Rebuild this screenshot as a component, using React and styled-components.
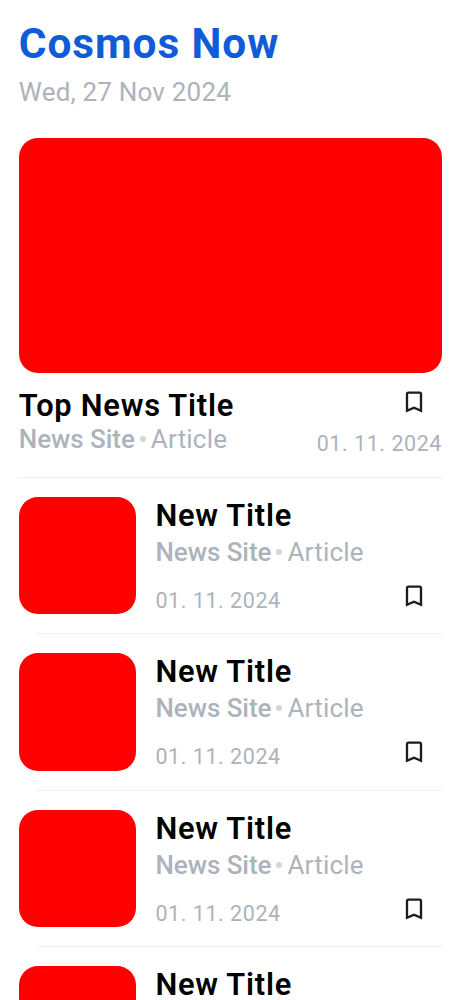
import React from "react";
import styled, { createGlobalStyle } from "styled-components";

const Global = createGlobalStyle`
  * { box-sizing: border-box; }
  html, body { margin: 0; background: #fff; overflow: hidden; }
  body { font-family: Roboto, "Liberation Sans", sans-serif; }
`;
const Page = styled.main`
  width: 461px; height: 1000px; overflow: hidden;
  padding: 19px 19px 0 18.8px; background: #fff; color: #000;
`;
const Brand = styled.h1`
  margin: 0; font-size: 42.4px; line-height: 50px; font-weight: 700;
  letter-spacing: 0.9px; color: #105bd8; white-space: nowrap;
`;
const Today = styled.div`
  margin-top: 7px; height: 32px; font-size: 26px; line-height: 32px;
  letter-spacing: 0.2px; color: #adb3bb; white-space: nowrap;
`;
const Hero = styled.div`
  margin-top: 30.4px; height: 235px; border-radius: 19px; background: #f00;
`;
const TopStory = styled.section`
  display: flex; justify-content: space-between; height: 104.6px;
  padding-top: 14.6px; border-bottom: 1px solid #eeeff0;
`;
const Title = styled.h2`
  margin: ${p => p.$top || 0}px 0 0; font-size: 30.8px; line-height: 36px; font-weight: 600;
  letter-spacing: 0.75px; white-space: nowrap;
`;
const Source = styled.div`
  display: flex; align-items: center; height: 32px;
  margin-top: ${p => p.$gap || 0}px;
  font-size: 26px; line-height: 32px; color: #adb3bb; white-space: nowrap;
`;
const Site = styled.span`font-weight: 500; letter-spacing: -0.05px;`;
const Dot = styled.span`
  width: 6px; height: 6px; margin: 0 5px; border-radius: 50%; background: #d3d5d8;
`;
const Section = styled.span`letter-spacing: 0.2px;`;
const DateText = styled.time`
  font-size: 21.5px; line-height: 26px; letter-spacing: 0.55px; color: #adb3bb; white-space: nowrap;
`;
const Side = styled.div`
  display: flex; flex-direction: column; align-items: flex-end;
  gap: 15px;
`;
const IconButton = styled.button`
  display: flex; margin: 0 14px 0 0; padding: 0; border: 0; background: none;
`;
const Item = styled.article`
  display: flex; gap: 19.4px; height: 156.4px; padding-top: 19px;
`;
const Thumb = styled.div`
  flex: none; width: 117.2px; height: 117.5px; border-radius: 19px; background: #f00;
`;
const Body = styled.div`flex: 1;`;
const Footer = styled.div`
  display: flex; align-items: flex-end; justify-content: space-between;
  height: 32px; margin-top: 14px;
`;
const FooterIcon = styled.div`align-self: flex-start;`;
const Rule = styled.hr`
  margin: -1px 0 0 18px; height: 1px; border: 0; background: #eeeff0;
`;

const Bookmark = () => (
  <IconButton aria-label="Bookmark">
    <svg width="28" height="28" viewBox="0 0 24 24" fill="#1c1b1f">
      <path d="M17 3H7c-1.100 0-2 .9-2 2v16l7-3 7 3V5c0-1.100-.9-2-2-2zm0 15-5-2.180L7 18V5h10v13z" />
    </svg>
  </IconButton>
);
const Byline = ({ gap }) => (
  <Source $gap={gap}><Site>News Site</Site><Dot /><Section>Article</Section></Source>
);

export default function App() {
  return (
    <Page>
      <Global />
      <Brand>Cosmos Now</Brand>
      <Today>Wed, 27 Nov 2024</Today>
      <Hero />
      <TopStory>
        <div><Title>Top News Title</Title><Byline gap={-0.5} /></div>
        <Side><Bookmark /><DateText>01. 11. 2024</DateText></Side>
      </TopStory>
      {[0, 1, 2, 3].map(i => (
        <React.Fragment key={i}>
          <Item>
            <Thumb />
            <Body>
              <Title $top={1}>New Title</Title>
              <Byline gap={2} />
              <Footer>
                <DateText>01. 11. 2024</DateText>
                <FooterIcon><Bookmark /></FooterIcon>
              </Footer>
            </Body>
          </Item>
          <Rule />
        </React.Fragment>
      ))}
    </Page>
  );
}
